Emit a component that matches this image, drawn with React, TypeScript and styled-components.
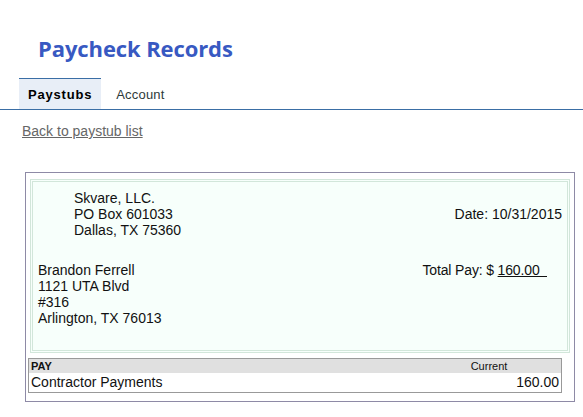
import React from 'react';
import styled, { createGlobalStyle } from 'styled-components';

const GlobalStyle = createGlobalStyle`
    html, body {
        margin: 0;
        padding: 0;
        background: #fff;
    }
    body {
        font-family: "Liberation Sans", Arial, sans-serif;
        font-size: 14px;
        color: #111;
    }
`

const payRows = [
    { label: 'Contractor Payments', current: '160.00' },
];

const App: React.FC = () => {
    return (
        <Page>
            <GlobalStyle />
            <Title>Paycheck Records</Title>
            <Tabs>
                <Tab $active>Paystubs</Tab>
                <Tab>Account</Tab>
            </Tabs>
            <BackLink href="#">Back to paystub list</BackLink>
            <Stub>
                <StubHead>
                    <TopRow>
                        <Company>
                            <div>Skvare, LLC.</div>
                            <div>PO Box 601033</div>
                            <div>Dallas, TX 75360</div>
                        </Company>
                        <DateLine>Date: 10/31/2015</DateLine>
                    </TopRow>
                    <BottomRow>
                        <Employee>
                            <div>Brandon Ferrell</div>
                            <div>1121 UTA Blvd</div>
                            <div>#316</div>
                            <div>Arlington, TX 76013</div>
                        </Employee>
                        <TotalPay>Total Pay: $ <Amount>{'160.00\u00a0\u00a0'}</Amount></TotalPay>
                    </BottomRow>
                </StubHead>
                <PayTable>
                    <thead>
                        <tr>
                            <HeadCell>PAY</HeadCell>
                            <HeadCell $center>Current</HeadCell>
                        </tr>
                    </thead>
                    <tbody>
                        {payRows.map((row) => (
                            <tr key={row.label}>
                                <Cell>{row.label}</Cell>
                                <Cell $right>{row.current}</Cell>
                            </tr>
                        ))}
                    </tbody>
                </PayTable>
            </Stub>
        </Page>
    );
};

export default App;

const Page = styled.div`
    padding-top: 32px;
`
const Title = styled.h1`
    margin: 0 0 14px 38px;
    font-family: "Open Sans", "Noto Sans", sans-serif;
    font-weight: 700;
    font-size: 22px;
    line-height: 32px;
    letter-spacing: -0.1px;
    color: #3859c2;
`
const Tabs = styled.div`
    display: flex;
    padding-left: 19px;
    border-bottom: 1px solid #3a6ea5;
`
const Tab = styled.div<{ $active?: boolean }>`
    height: 30px;
    padding: 0 9px;
    margin-right: 6px;
    display: flex;
    align-items: center;
    font-size: 13px;
    font-weight: ${({ $active }) => ($active ? 700 : 400)};
    color: ${({ $active }) => ($active ? '#000' : '#2e3a3a')};
    background: ${({ $active }) => ($active ? '#e8eef7' : 'transparent')};
    border-top: 1px solid ${({ $active }) => ($active ? '#3a6ea5' : 'transparent')};
    letter-spacing: ${({ $active }) => ($active ? '0.8px' : '0.2px')};
`
const BackLink = styled.a`
    display: inline-block;
    margin: 13px 0 0 22px;
    font-size: 14px;
    color: #666;
    text-decoration: underline;
`
const Stub = styled.div`
    margin: 33px 8px 0 25px;
    border: 1px solid #8e8aa6;
    padding: 6px 4px 8px 4px;
`
const StubHead = styled.div`
    border: 3px double #d2e6da;
    background: #f7fffb;
    padding: 8px 5px 24px 5px;
    line-height: 16px;
`
const TopRow = styled.div`
    display: flex;
    justify-content: space-between;
    align-items: flex-start;
`
const Company = styled.div`
    padding-left: 36px;
`
const DateLine = styled.div`
    margin-top: 16px;
`
const BottomRow = styled.div`
    display: flex;
    justify-content: space-between;
    align-items: flex-start;
    margin-top: 24px;
`
const Employee = styled.div``
const TotalPay = styled.div`
    margin-right: 15px;
    letter-spacing: -0.15px;
`
const Amount = styled.span`
    text-decoration: underline;
    white-space: pre;
`
const PayTable = styled.table`
    margin-top: 5px;
    width: 534px;
    margin-left: -2px;
    border: 1px solid #999;
    border-collapse: collapse;
`
const HeadCell = styled.th<{ $center?: boolean }>`
    background: #e0e0e0;
    font-size: 11px;
    font-weight: ${({ $center }) => ($center ? 400 : 700)};
    text-align: ${({ $center }) => ($center ? 'center' : 'left')};
    width: ${({ $center }) => ($center ? '140px' : 'auto')};
    padding: 1px 2px 0 2px;
    line-height: 13px;
    color: #111;
`
const Cell = styled.td<{ $right?: boolean }>`
    font-size: 14px;
    text-align: ${({ $right }) => ($right ? 'right' : 'left')};
    padding: 1px 2px 2px 2px;
    line-height: 16px;
    color: #111;
`
